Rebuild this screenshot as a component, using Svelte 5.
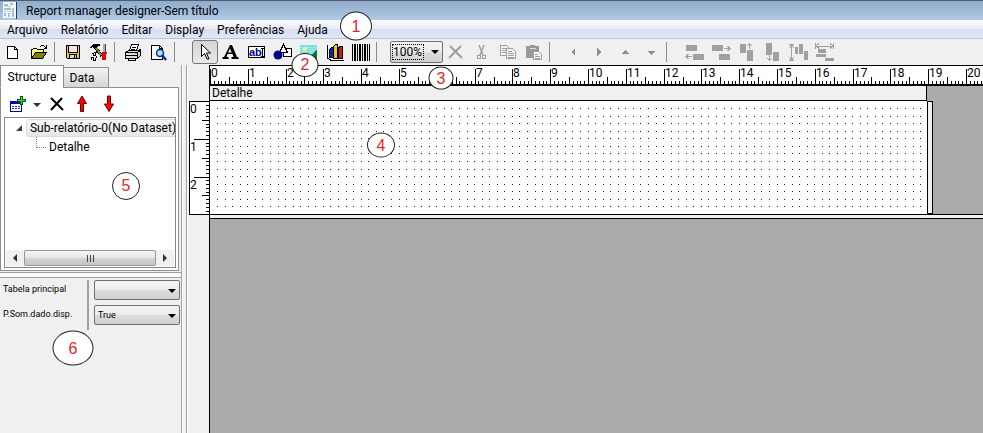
<script>
  const CM = 37.8; // px per centimetre
  const menus = ['Arquivo', 'Relatório', 'Editar', 'Display', 'Preferências', 'Ajuda'];
  const toolbar = [
    [['new', 'Novo'], ['open', 'Abrir']],
    [['save', 'Salvar'], ['setup', 'Configurar']],
    [['print', 'Imprimir'], ['preview', 'Visualizar']]
  ];
  const tools = [
    ['pointer', 'Selecionar'],
    ['label', 'Texto'],
    ['expression', 'Expressão'],
    ['shape', 'Forma'],
    ['image', 'Imagem'],
    ['chart', 'Gráfico'],
    ['barcode', 'Código de barras']
  ];
  const edits = [['delete', 'Excluir'], ['cut', 'Recortar'], ['copy', 'Copiar'], ['paste', 'Colar']];
  const moves = [['left', 'Esquerda'], ['right', 'Direita'], ['up', 'Acima'], ['down', 'Abaixo']];
  const aligns = [
    ['alignLeft', 'Alinhar à esquerda'],
    ['alignRight', 'Alinhar à direita'],
    ['alignTop', 'Alinhar acima'],
    ['alignBottom', 'Alinhar abaixo'],
    ['spaceV', 'Espaçar na vertical'],
    ['spaceH', 'Espaçar na horizontal']
  ];
  const notes = [
    { n: 1, x: 356, y: 26, w: 32, h: 29 },
    { n: 2, x: 305, y: 65, w: 27, h: 24 },
    { n: 3, x: 441, y: 78, w: 25, h: 23 },
    { n: 4, x: 381, y: 145, w: 28, h: 25 },
    { n: 5, x: 126, y: 186, w: 28, h: 28 },
    { n: 6, x: 73, y: 348, w: 41, h: 35 }
  ];

  let tool = $state('pointer');
  let tab = $state('Structure');
  let zoom = $state('100%');
  let mainTable = $state('');
  let printIfData = $state('True');
  let rulerWidth = $state(774);

  function marks(length) {
    const count = Math.ceil((length * 10) / CM);
    return Array.from({ length: count }, (_, i) => {
      const pos = Math.round((i * CM) / 10);
      return {
        pos,
        size: i % 10 === 0 ? 15 : i % 5 === 0 ? 7 : 3,
        text: i % 10 === 0 && pos + 16 < length ? i / 10 : null
      };
    });
  }

  const hMarks = $derived(marks(rulerWidth));
  const vMarks = marks(112);

  // grid points, one every 2 mm
  const step = CM / 5;
  let dots = '';
  for (let r = 1; r <= 14; r++) {
    for (let c = 1; c <= 94; c++) {
      dots += `M${Math.floor(c * step)} ${Math.floor(r * step)}h1v1h-1z`;
    }
  }
</script>

{#snippet icon(name)}
  <svg class="icon" width="20" height="18" viewBox="0 0 20 18" shape-rendering="crispEdges" aria-hidden="true">
    {#if name === 'new'}
      <path d="M4.500 3.500h7l3 3v9h-10z" fill="#fff" stroke="#000" />
      <path d="M11.500 3.500v3h3" fill="none" stroke="#000" />
    {:else if name === 'open'}
      <path d="M2.500 14.500v-8h1l1-1h3l1 1h6v3" fill="#ffff80" stroke="#000" />
      <path d="M2.500 15.500l4-6h11l-4 6z" fill="#808000" stroke="#000" />
      <path d="M11 3.500h1M12 2.500h3M15 3.500h1M16 4.500h2M15 5.500h3M17.500 2v4" fill="none" stroke="#000" />
    {:else if name === 'save'}
      <path d="M3.500 2.500h13v13h-12l-1-1z" fill="#e0d020" stroke="#000" />
      <path d="M6 3h8v6h-8z" fill="#fbdcf0" /><path d="M5.500 3v6.500h9v-6.500" fill="none" stroke="#000" />
      <path d="M6 11h8v5h-8z" fill="#000" /><path d="M7 12h4v3h-4z" fill="#ddd" /><path d="M12 12h1v3h-1z" fill="#e0d020" />
    {:else if name === 'setup'}
      <path d="M1 5l3-4h7v2h-2l-1 3h-3l-1-2z" fill="#000" />
      <path d="M6 4l7 9" stroke="#000" stroke-width="3" /><path d="M7 5l5 7" stroke="#909010" stroke-width="2" />
      <path d="M2.500 10.500h2v2h2v-3h-2M6.500 10l2-2M2.500 17v-3h2v3h2l1-4" fill="none" stroke="#000" />
      <path d="M14 1h2v8h-2z" fill="#aaa" /><path d="M16 1h1v8h-1z" fill="#444" />
      <path d="M13 9h5v2h-1v6h-4v-6z" fill="#d01010" />
    {:else if name === 'print'}
      <path d="M6.500 8l2-6.500h7l-2 6.500z" fill="#fff" stroke="#000" />
      <path d="M9 4h4M8 6h4" stroke="#000" />
      <path d="M2.500 9.500l3-2h10l2 -1v6l-3 3h-12z" fill="#ddd" stroke="#000" />
      <path d="M3 9.500h11.500v6M3 12h11M15 9l3-2M5.500 15.500v2h7v-2" fill="none" stroke="#000" />
      <path d="M12 10h2v1h-2z" fill="#d8c800" />
    {:else if name === 'preview'}
      <path d="M2.500 2.500h8l3 3v11h-11z" fill="#fff" stroke="#000" />
      <path d="M10.500 2.500v3h3" fill="none" stroke="#000" />
      <circle cx="11" cy="10" r="3.500" fill="#9fe8ff" stroke="#10307c" stroke-width="1.500" shape-rendering="auto" />
      <path d="M13 12l4 5" stroke="#0a30b0" stroke-width="2.500" shape-rendering="auto" />
    {:else if name === 'pointer'}
      <path d="M6.500 1.500v12l3-3 2.500 5.500h2l-2.500-6h4z" fill="#fff" stroke="#000" shape-rendering="auto" />
    {:else if name === 'label'}
      <path d="M9 2h2l5 12h1.500v2h-7v-2h2l-1-3h-5l-1 3h2v2h-6v-2h1.500zM9 5.500l-2 4h3.700z" fill="#000" fill-rule="evenodd" shape-rendering="auto" />
    {:else if name === 'expression'}
      <path d="M1.500 3.500h16v11h-16z" fill="#fff" stroke="#000" />
      <text x="2" y="13" font-family="Liberation Sans, sans-serif" font-size="11" font-weight="bold" fill="#00008b">ab</text>
      <path d="M14 5h3M14 13h3M15.500 5v8" stroke="#000" />
    {:else if name === 'shape'}
      <path d="M10.500 5.500h8v8h-8z" fill="#fff" stroke="#000" />
      <path d="M10.500 1.500l-4 8h8z" fill="#fff" stroke="#000" />
      <circle cx="5" cy="12" r="4.500" fill="#00008b" shape-rendering="auto" />
    {:else if name === 'image'}
      <path d="M1 2h17v15h-17z" fill="#7fdfdf" />
      <path d="M2 4h15M1 6h16M2 8h15M1 10h16" stroke="#a9f5f5" stroke-dasharray="1 1" />
      <circle cx="6" cy="6" r="2" fill="#f2ee9b" />
      <path d="M1 16l5-3 4 1 8-7v10h-17z" fill="#087830" />
    {:else if name === 'chart'}
      <path d="M2.500 2v13l3 2h13" fill="none" stroke="#000" />
      <path d="M4.500 6.500l2-2h2v10h-4z" fill="#1520b0" stroke="#000" />
      <path d="M8.500 3.500l2-2h2v14h-4z" fill="#e4c81c" stroke="#000" />
      <path d="M13.500 5.500l1-2h3v12h-4z" fill="#c81818" stroke="#000" />
    {:else if name === 'barcode'}
      <path d="M1 1h1v17h-1zM3 1h2v17h-2zM6 1h1v17h-1zM8 1h2v17h-2zM11 1h1v17h-1zM13 1h2v17h-2zM16 1h1v17h-1zM18 1h1v17h-1z" fill="#000" />
    {:else if name === 'delete'}
      <path d="M4 3l12 12M15 3l-12 12" stroke="#9c9c9c" stroke-width="2" shape-rendering="auto" />
    {:else if name === 'cut'}
      <path d="M7 2l4 10M12 2l-4 10" stroke="#a0a0a0" stroke-width="1.500" fill="none" shape-rendering="auto" />
      <path d="M5.500 12.500h3v3h-3zM10.500 12.500h3v3h-3z" fill="none" stroke="#a0a0a0" />
    {:else if name === 'copy'}
      <path d="M2.500 2.500h6l2 2v8h-8z" fill="#f4f4f4" stroke="#a0a0a0" />
      <path d="M4 5h4M4 7h4M4 9h4" stroke="#a0a0a0" />
      <path d="M8.500 5.500h6l3 3v7h-9z" fill="#f4f4f4" stroke="#a0a0a0" />
      <path d="M10 8h4M10 10h6M10 12h6M10 14h6" stroke="#a0a0a0" />
    {:else if name === 'paste'}
      <path d="M2 3h4v-1h5v1h4v12h-13z" fill="#999" />
      <path d="M6 5h6" stroke="#ddd" />
      <path d="M9.500 8.500h5l3 3v5h-8z" fill="#f4f4f4" stroke="#a0a0a0" />
      <path d="M11 11h3M11 13h5M11 15h5" stroke="#a0a0a0" />
    {:else if name === 'left'}
      <path d="M12 5v8l-4-4z" fill="#8c8c8c" />
    {:else if name === 'right'}
      <path d="M8 5v8l4-4z" fill="#8c8c8c" />
    {:else if name === 'up'}
      <path d="M6 11h8l-4-4z" fill="#8c8c8c" />
    {:else if name === 'down'}
      <path d="M6 8h8l-4 4z" fill="#8c8c8c" />
    {:else if name === 'alignLeft'}
      <path d="M1 2h11v6h-11zM8 11h11v6h-11z" fill="#a0a0a0" />
      <path d="M1 13.500h6M3.500 11l-2.500 2.500 2.500 2.500" fill="none" stroke="#a0a0a0" />
    {:else if name === 'alignRight'}
      <path d="M1 2h11v6h-11zM8 11h11v6h-11z" fill="#a0a0a0" />
      <path d="M13 5.500h6M16.500 3l2.500 2.500-2.500 2.500" fill="none" stroke="#a0a0a0" />
    {:else if name === 'alignTop'}
      <path d="M3 1h6v9h-6zM10 7h6v11h-6z" fill="#a0a0a0" />
      <path d="M12.500 0v6M10 3l2.500-2.500 2.500 2.500" fill="none" stroke="#a0a0a0" />
    {:else if name === 'alignBottom'}
      <path d="M3 0h6v12h-6zM10 9h6v9h-6z" fill="#a0a0a0" />
      <path d="M6.500 12v6M4 15l2.500 2.500 2.500-2.500" fill="none" stroke="#a0a0a0" />
    {:else if name === 'spaceV'}
      <path d="M6 4h3v7h-3zM10 1h4v10h-4zM15 8h4v9h-4z" fill="#a0a0a0" />
      <path d="M0 1.500h5M0 17.500h5M2.500 2v15M0 5l2.500-3 2.500 3M0 14l2.500 3 2.500-3" fill="none" stroke="#a0a0a0" />
    {:else if name === 'spaceH'}
      <path d="M3 6h8v4h-8zM1 11h10v3h-10zM10 15h9v3h-9z" fill="#a0a0a0" />
      <path d="M0.500 0v6M18.500 0v6M1 3h17M4 0.500l-3 2.500 3 2.500M15 0.500l3 2.500-3 2.500" fill="none" stroke="#a0a0a0" />
    {:else if name === 'dataset'}
      <path d="M3.500 6.500h11v10h-11z" fill="#fff" stroke="#0000a8" />
      <path d="M3 6h12v3h-12z" fill="#0000c8" />
      <path d="M5 11.500h9M5 13.500h9" stroke="#303080" stroke-dasharray="2 1" />
      <path d="M13 1h3v3h3v3h-3v3h-3v-3h-3v-3h3z" fill="#0a5a14" /><path d="M14 2h1v3h3v1h-3v3h-1v-3h-3v-1h3z" fill="#3be03b" />
    {:else if name === 'remove'}
      <path d="M4 3l12 12M15 3l-11 12" stroke="#000" stroke-width="2" shape-rendering="auto" />
    {:else if name === 'moveUp'}
      <path d="M9 1l4.500 7.500h-3v8h-3v-8h-3z" fill="#f00" stroke="#600" shape-rendering="auto" />
    {:else if name === 'moveDown'}
      <path d="M10 16.500l4.500-7.500h-3v-8h-3v8h-3z" fill="#f00" stroke="#600" shape-rendering="auto" />
    {/if}
  </svg>
{/snippet}

<div class="window">
  <header class="title">
    <svg width="16" height="18" viewBox="0 0 16 18" shape-rendering="crispEdges" aria-hidden="true">
      <path d="M0 0h13v16h-13z" fill="#f3f7fa" />
      <path d="M13 0h1v17h-1z" fill="#26384c" />
      <path d="M1 2h4v2h-4zM7 1h3v2h-3zM1 6h7v2h-7zM1 11h2v3h-2zM5 11h2v4h-2zM9 6h2v9h-2z" fill="#9fbfd2" />
      <path d="M2 4.500h6M1 9.500h9" stroke="#d3d2ae" />
    </svg>
    <span>Report manager designer-Sem título</span>
  </header>

  <nav class="menubar">
    {#each menus as menu}
      <button>{menu}</button>
    {/each}
  </nav>

  <div class="toolbar">
    {#each toolbar as group}
      {#each group as [name, title]}
        <button class="tool" aria-label={title}>{@render icon(name)}</button>
      {/each}
      <span class="sep"></span>
    {/each}
    <div class="group tools">
      {#each tools as [name, title]}
        <button class="tool" class:active={tool === name} aria-label={title} onclick={() => (tool = name)}>
          {@render icon(name)}
        </button>
      {/each}
    </div>
    <span class="sep"></span>
    <label class="combo zoom">
      <select bind:value={zoom} aria-label="Zoom">
        <option>50%</option>
        <option>100%</option>
        <option>200%</option>
      </select>
    </label>
    {#each edits as [name, title]}
      <button class="tool" aria-label={title}>{@render icon(name)}</button>
    {/each}
    <span class="sep"></span>
    <div class="group moves">
      {#each moves as [name, title]}
        <button class="tool" aria-label={title}>{@render icon(name)}</button>
      {/each}
    </div>
    <span class="sep"></span>
    <div class="group aligns">
      {#each aligns as [name, title]}
        <button class="tool" aria-label={title}>{@render icon(name)}</button>
      {/each}
    </div>
  </div>

  <div class="body">
    <aside>
      <div class="tabs">
        {#each ['Structure', 'Data'] as name}
          <button class:active={tab === name} onclick={() => (tab = name)}>{name}</button>
        {/each}
      </div>
      <section class="page">
        <div class="actions">
          <button class="tool" aria-label="Adicionar">{@render icon('dataset')}</button>
          <button class="drop" aria-label="Mais opções"></button>
          <button class="tool" aria-label="Remover">{@render icon('remove')}</button>
          <button class="tool" aria-label="Mover acima">{@render icon('moveUp')}</button>
          <button class="tool" aria-label="Mover abaixo">{@render icon('moveDown')}</button>
        </div>
        <div class="tree">
          <ul>
            <li>
              <svg width="8" height="8" viewBox="0 0 8 8" aria-hidden="true"><path d="M7 1v6h-6z" fill="#404040" /></svg>
              <span class="selected">Sub-relatório-0(No Dataset)</span>
              <ul>
                <li><span>Detalhe</span></li>
              </ul>
            </li>
          </ul>
          <div class="scroll">
            <button class="arrow back" aria-label="Rolar para a esquerda"></button>
            <div class="thumb"><i></i><i></i><i></i></div>
            <button class="arrow next" aria-label="Rolar para a direita"></button>
          </div>
        </div>
      </section>
      <section class="props">
        <div class="names">
          <label for="main-table">Tabela principal</label>
          <label for="print-data">P.Som.dado.disp.</label>
        </div>
        <div class="values">
          <div class="combo">
            <select id="main-table" bind:value={mainTable}>
              <option value=""></option>
            </select>
          </div>
          <div class="combo">
            <select id="print-data" bind:value={printIfData}>
              <option>True</option>
              <option>False</option>
            </select>
          </div>
        </div>
      </section>
    </aside>
    <div class="splitter"></div>

    <div class="gutter">
      <svg class="vruler" width="20" height="114" shape-rendering="crispEdges">
        {#each vMarks as m}
          <rect x={19 - m.size} y={m.pos - 1} width={m.size} height="1" />
        {/each}
        {#each [0, 1, 2] as n}
          <text x="0" y={Math.round(n * CM) + 11}>{n}</text>
        {/each}
      </svg>
    </div>
    <main bind:clientWidth={rulerWidth}>
      <svg class="hruler" width="100%" height="21" shape-rendering="crispEdges">
        {#each hMarks as m}
          <rect x={m.pos} y={18 - m.size} width="1" height={m.size} />
          {#if m.text !== null}
            <text x={m.pos + 1} y="11">{m.text}</text>
          {/if}
        {/each}
      </svg>
      <div class="band">
        <div class="band-title">Detalhe</div>
        <div class="band-row">
          <svg class="paper" width="717" height="113" shape-rendering="crispEdges">
            <path d={dots} fill="#1c1c50" />
          </svg>
          <div class="grip"></div>
        </div>
      </div>
      <div class="band-end"></div>
    </main>
  </div>

  {#each notes as note}
    <span
      class="note"
      style="left: {note.x}px; top: {note.y}px; width: {note.w}px; height: {note.h}px;"
    >{note.n}</span>
  {/each}
</div>

<style>
  :global(body) {
    margin: 0;
    background: #f0f0f0;
  }

  * {
    box-sizing: border-box;
  }

  .window {
    position: relative;
    display: flex;
    flex-direction: column;
    min-height: 100vh;
    overflow: hidden;
    background: #f0f0f0;
    color: #000;
    font: 12px/16px Roboto, 'Segoe UI', sans-serif;
  }

  button,
  select {
    margin: 0;
    padding: 0;
    border: 0;
    background: none;
    color: inherit;
    font: inherit;
  }

  .title {
    display: flex;
    align-items: center;
    gap: 7px;
    height: 20px;
    padding-left: 3px;
    border-top: 1px solid #4e5e70;
    background: linear-gradient(#90acca, #afc9e5);
  }

  .menubar {
    display: flex;
    gap: 13px;
    height: 19px;
    padding: 2px 0 0 7px;
    border-bottom: 1px solid #b9c2dd;
    background: linear-gradient(#fbfcfe, #e6eaf5 50%, #d9dff0 51%, #e0e6f6);
  }

  .toolbar {
    display: flex;
    align-items: center;
    height: 26px;
  }

  .group {
    display: flex;
  }

  .tools {
    margin-left: 12px;
  }

  .moves {
    margin-left: 5px;
  }

  .aligns {
    margin-left: 10px;
  }

  .tool {
    display: flex;
    align-items: center;
    justify-content: center;
    width: 26px;
    height: 24px;
  }

  .tool.active {
    border: 1px solid #777;
    border-radius: 3px;
    background: linear-gradient(#d4d4d4, #e9e9e9);
  }

  .icon {
    flex: none;
  }

  .sep {
    width: 8px;
    height: 20px;
    background: linear-gradient(#8a8a8a, #8a8a8a) 2px 0 / 1px 100% no-repeat;
  }

  .combo {
    position: relative;
    display: block;
  }

  .combo select {
    display: block;
    width: 100%;
    height: 20px;
    padding-left: 3px;
    appearance: none;
    border: 1px solid #707070;
    border-radius: 2px;
    background: linear-gradient(#f4f4f4, #ececec 50%, #dedede 51%, #d0d0d0);
  }

  .combo::after {
    content: '';
    position: absolute;
    right: 4px;
    top: 9px;
    border: 4px solid transparent;
    border-top-color: #000;
    border-bottom: 0;
    pointer-events: none;
  }

  .zoom {
    width: 53px;
    margin-left: 8px;
  }

  .zoom select {
    height: 22px;
    padding-left: 2px;
  }

  /* focus rectangle round the current value */
  .zoom::before {
    content: '';
    position: absolute;
    inset: 3px 19px 3px 2px;
    border: 1px dotted #000;
    pointer-events: none;
  }

  .body {
    flex: 1;
    display: flex;
  }

  aside {
    flex: none;
    width: 181px;
  }

  .tabs {
    display: flex;
    align-items: flex-end;
    height: 22px;
  }

  .tabs button {
    width: 45px;
    height: 20px;
    padding-right: 8px;
    border: 1px solid #8c8e96;
    border-width: 1px 1px 0 0;
    background: linear-gradient(#f2f2f2, #d6d6d6);
  }

  .tabs button.active {
    width: 64px;
    height: 22px;
    padding-right: 0;
    border-left-width: 1px;
    background: #fff;
  }

  .page {
    display: flex;
    flex-direction: column;
    width: 179px;
    height: 184px;
    padding: 4px 2px 2px 3px;
    border: 1px solid #8c8e96;
    border-top-color: transparent;
    background: linear-gradient(#8c8e96, #8c8e96) 63px 0 / 100% 1px no-repeat border-box, #fff;
  }

  .actions {
    display: flex;
    height: 25px;
  }

  .drop {
    display: flex;
    align-items: center;
    justify-content: center;
    width: 14px;
  }

  .drop::before {
    content: '';
    border: 4px solid transparent;
    border-top-color: #333;
    border-bottom: 0;
  }

  .tree {
    flex: 1;
    display: flex;
    flex-direction: column;
    justify-content: space-between;
    padding: 1px;
    border: 1px solid #82878f;
    overflow: hidden;
  }

  .tree ul {
    margin: 0;
    padding: 0;
    list-style: none;
  }

  .tree > ul > li {
    padding-left: 9px;
    line-height: 18px;
    white-space: nowrap;
  }

  .selected {
    display: inline-block;
    padding: 0 1px 0 3px;
    border: 1px solid #dadada;
    border-radius: 3px;
    background: linear-gradient(#f8f8f8, #e6e6e6);
    line-height: 16px;
  }

  .tree ul ul li {
    display: flex;
    align-items: center;
    gap: 3px;
    padding-left: 21px;
  }

  .tree ul ul li::before {
    content: '';
    width: 9px;
    height: 10px;
    margin-bottom: 8px;
    border: 1px dotted #808080;
    border-width: 0 0 1px 1px;
  }

  .scroll {
    display: flex;
    height: 16px;
    background: #f0f0f0;
  }

  .arrow {
    display: flex;
    align-items: center;
    justify-content: center;
    width: 18px;
  }

  .arrow::before {
    content: '';
    border: 4px solid transparent;
  }

  .back::before {
    border-right-color: #303030;
    border-left: 0;
  }

  .next::before {
    border-left-color: #303030;
    border-right: 0;
  }

  .thumb {
    flex: 1;
    display: flex;
    align-items: center;
    justify-content: center;
    gap: 2px;
    border: 1px solid #979797;
    border-radius: 2px;
    background: linear-gradient(#f4f4f4, #e6e6e6 50%, #d2d2d2 51%, #c6c6c6);
  }

  .thumb i {
    width: 1px;
    height: 7px;
    background: #444;
  }

  .props {
    display: flex;
    margin-top: 1px;
    padding-top: 7px;
    border-top: 1px solid #a0a0a0;
    box-shadow: inset 0 4px 0 #fafafa, inset 0 5px 0 #a0a0a0;
    font-size: 9px;
  }

  .names {
    display: flex;
    flex-direction: column;
    gap: 9px;
    width: 89px;
    height: 50px;
    padding: 1px 0 0 3px;
    border-right: 2px solid #a0a0a0;
  }

  .values {
    display: flex;
    flex-direction: column;
    gap: 5px;
    flex: 1;
    padding: 0 1px 0 5px;
  }

  .splitter {
    flex: none;
    width: 8px;
    background: linear-gradient(90deg, #a0a0a0 1px, #fff 1px 2px, #f0f0f0 2px 5px, #a0a0a0 5px 6px, #fff 6px 7px, #f0f0f0 7px);
  }

  .gutter {
    flex: none;
    width: 20px;
    padding-top: 36px;
  }

  .vruler {
    display: block;
    border: 1px solid #000;
    border-right: 0;
    background: #fff;
  }

  main {
    flex: 1;
    min-width: 0;
    border-left: 1px solid #000;
    background: #ababab;
  }

  .hruler {
    display: block;
    border: solid #000;
    border-width: 1px 0 2px;
    background: #fff;
  }

  .band {
    width: 723px;
  }

  .band-title {
    width: 717px;
    height: 15px;
    padding-left: 2px;
    border: solid #000;
    border-width: 0 1px 1px 0;
    background: #f0f0f0;
    line-height: 14px;
  }

  .band-row {
    display: flex;
  }

  .paper {
    display: block;
    background: #fff;
  }

  .grip {
    width: 6px;
    border: 1px solid #000;
    background: #f0f0f0;
  }

  .band-end {
    height: 5px;
    border: solid #000;
    border-width: 1px 0;
    background: #f0f0f0;
  }

  .note {
    position: absolute;
    display: flex;
    align-items: center;
    justify-content: center;
    transform: translate(-50%, -50%);
    border: 1px solid #222;
    border-radius: 50%;
    background: #fff;
    color: #e02828;
    font: 16px/16px 'Liberation Sans', Arial, sans-serif;
  }
</style>
